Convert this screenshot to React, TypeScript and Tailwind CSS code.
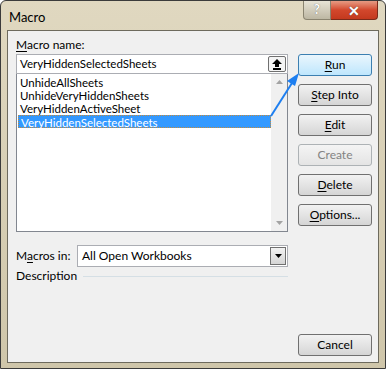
import React from 'react';

const items = ['UnhideAllSheets', 'UnhideVeryHiddenSheets', 'VeryHiddenActiveSheet', 'VeryHiddenSelectedSheets'];

function Btn({ label, u, rest, disabled, active }: { label?: string; u: string; rest: string; disabled?: boolean; active?: boolean }) {
  return (
    <button
      className={
        'h-[22px] w-[74px] rounded-[3px] border text-[12px] leading-none ' +
        (active
          ? 'border-[#3c7fb1] bg-gradient-to-b from-[#eaf6fd] to-[#bee6fd] text-black'
          : disabled
          ? 'border-[#adb2b5] bg-gradient-to-b from-[#f4f4f4] to-[#e4e4e4] text-[#838383]'
          : 'border-[#707070] bg-gradient-to-b from-[#f2f2f2] to-[#d5d5d5] text-black')
      }
    >
      {label ?? (
        <>
          <span className="underline underline-offset-2">{u}</span>
          {rest}
        </>
      )}
    </button>
  );
}

export default function App() {
  return (
    <div className="relative h-[369px] w-[386px] overflow-hidden rounded-t-[6px] border border-[#3b3b3b] bg-gradient-to-b from-[#e0d8c0] to-[#cfc6aa] font-['Lato',sans-serif] text-[12px] text-black">
      {/* title bar */}
      <div className="flex h-[29px] items-start">
        <div className="pl-[8px] pt-[7px] text-[13px]">Macro</div>
        <div className="ml-auto mr-[7px] flex">
          <div className="flex h-[19px] w-[28px] items-center justify-center rounded-bl-[4px] border border-t-0 border-[#8a8470] bg-gradient-to-b from-[#e7e3d6] to-[#bdb7a3] text-[13px] font-bold text-white [text-shadow:0_0_1px_#555]">
            ?
          </div>
          <div className="flex h-[19px] w-[47px] items-center justify-center rounded-br-[4px] border border-l-0 border-t-0 border-[#7a2a1a] bg-gradient-to-b from-[#e59a83] via-[#d2472c] to-[#c4391e] text-[14px] font-bold text-white [text-shadow:0_0_1px_#333]">
            ✕
          </div>
        </div>
      </div>

      {/* client area */}
      <div className="mx-[6px] h-[333px] border border-[#6d6a5d] bg-[#f0f0f0]">
        <div className="flex gap-[10px] pl-[8px] pt-[6px]">
          <div className="w-[272px]">
            <div className="h-[17px] leading-[16px]">
              <span className="underline underline-offset-2">M</span>acro name:
            </div>
            <div className="flex h-[20px] items-center border border-[#abadb3] bg-white pl-[3px] text-[11.5px]">
              <span>VeryHiddenSelectedSheets</span>
              <div className="ml-auto mr-[1px] flex h-[16px] w-[18px] items-center justify-center rounded-[2px] border border-[#707070] bg-[#f4f4f4]">
                <svg width="10" height="11" viewBox="0 0 10 11">
                  <path d="M5 0 L10 5 L7 5 L7 8 L3 8 L3 5 L0 5 Z" fill="#000" />
                  <rect x="1" y="9" width="8" height="2" fill="#000" />
                </svg>
              </div>
            </div>
            <div className="flex h-[158px] border border-t-0 border-[#828790] bg-white">
              <div className="flex-1 pl-[1px] pt-[2px] text-[11.5px]">
                {items.map((it, i) => (
                  <div
                    key={it}
                    className={
                      'h-[13px] pl-[2px] leading-[13px] ' +
                      (i === 3 ? 'border border-dotted border-[#c48a3a] bg-[#3399ff] pl-[1px] leading-[11px] text-white' : '')
                    }
                  >
                    {it}
                  </div>
                ))}
              </div>
              <div className="flex w-[16px] flex-col items-center justify-between bg-[#f0f0f0] py-[6px]">
                <svg width="7" height="4" viewBox="0 0 7 4">
                  <path d="M0 4 L3.5 0 L7 4 Z" fill="#a3a3a3" />
                </svg>
                <svg width="7" height="4" viewBox="0 0 7 4">
                  <path d="M0 0 L3.5 4 L7 0 Z" fill="#a3a3a3" />
                </svg>
              </div>
            </div>
            <div className="mt-[13px] flex items-center">
              <div className="w-[61px]">
                M<span className="underline underline-offset-2">a</span>cros in:
              </div>
              <div className="flex h-[22px] flex-1 items-center border border-[#abadb3] bg-white pl-[4px]">
                <span>All Open Workbooks</span>
                <div className="ml-auto mr-[1px] flex h-[18px] w-[16px] items-center justify-center border border-[#707070] bg-gradient-to-b from-[#f2f2f2] to-[#d5d5d5]">
                  <svg width="7" height="4" viewBox="0 0 7 4">
                    <path d="M0 0 L3.5 4 L7 0 Z" fill="#000" />
                  </svg>
                </div>
              </div>
            </div>
            <div className="flex items-center">
              <span>Description</span>
              <div className="ml-[6px] h-px flex-1 bg-[#d5dfe5]" />
            </div>
          </div>

          <div className="flex flex-col pt-[17px]">
            <div className="flex flex-col gap-[8px]">
              <Btn u="R" rest="un" active />
              <Btn u="S" rest="tep Into" />
              <Btn u="E" rest="dit" />
              <Btn label="Create" u="" rest="" disabled />
              <Btn u="D" rest="elete" />
              <Btn u="O" rest="ptions..." />
            </div>
            <div className="mt-[108px]">
              <Btn label="Cancel" u="" rest="" />
            </div>
          </div>
        </div>
      </div>

      {/* pointer arrow */}
      <svg className="pointer-events-none absolute left-0 top-0" width="386" height="369">
        <line x1="270" y1="115" x2="291" y2="82" stroke="#1e7ff0" strokeWidth="2" />
        <path d="M298 72 L286 80 L294 85 Z" fill="#1e7ff0" />
      </svg>
    </div>
  );
}
